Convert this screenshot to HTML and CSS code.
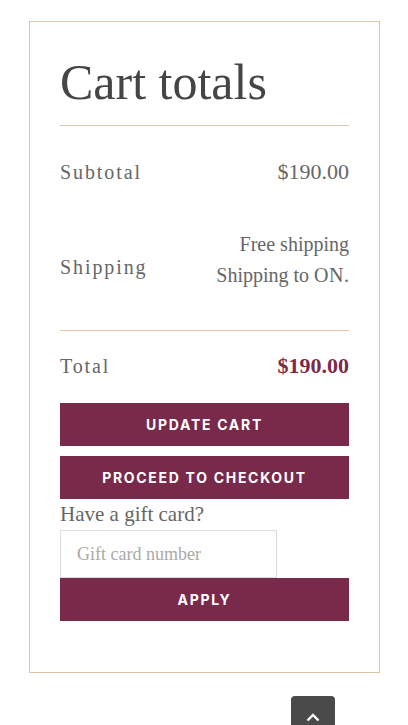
FILE: index.html
```html
<!DOCTYPE html>
<html lang="en">
<head>
<meta charset="utf-8">
<title>Cart totals</title>
<link rel="stylesheet" href="styles.css">
</head>
<body>
<div class="page">
  <div class="cart-totals">
    <h2 class="title">Cart totals</h2>
    <div class="row row-subtotal">
      <span class="label">Subtotal</span>
      <span class="amount">$190.00</span>
    </div>
    <div class="row row-shipping">
      <span class="label label-shipping">Shipping</span>
      <div class="ship-values">
        <span>Free shipping</span>
        <span>Shipping to <strong class="ship-strong">ON</strong>.</span>
      </div>
    </div>
    <div class="row row-total">
      <span class="label">Total</span>
      <span class="amount amount-total">$190.00</span>
    </div>
    <div class="actions">
      <button class="btn" type="button">Update cart</button>
      <button class="btn" type="button">Proceed to checkout</button>
    </div>
    <div class="gift">
      <p class="gift-title">Have a gift card?</p>
      <input class="gift-input" type="text" placeholder="Gift card number">
      <button class="btn btn-apply" type="button">Apply</button>
    </div>
  </div>
</div>
<a class="to-top" href="#" aria-label="Back to top">
  <svg width="14" height="9" viewBox="0 0 14 9"><path d="M1.5 7.5 L7 2 L12.5 7.5" fill="none" stroke="#fff" stroke-width="2.4"/></svg>
</a>
</body>
</html>
```
FILE: styles.css
```css
html, body {
  margin: 0;
  padding: 0;
  background: #fff;
}
.page {
  padding: 21px 28px 0 29px;
}
.cart-totals {
  width: 289px;
  border: 1px solid #dcc4a8;
  padding: 30px 30px 51px 30px;
  font-family: "Liberation Serif", "Times New Roman", serif;
  color: #666;
}
.title {
  margin: 0;
  font-weight: 400;
  font-size: 50px;
  line-height: 60px;
  color: #454545;
  padding-bottom: 13px;
  border-bottom: 1px solid #d6c7b5;
}
.row {
  display: flex;
  justify-content: space-between;
}
.label {
  font-size: 20px;
  letter-spacing: 1.9px;
  line-height: 28px;
}
.amount {
  font-size: 22px;
  line-height: 28px;
}
.row-subtotal {
  padding-top: 32px;
  height: 57px;
}
.row-shipping {
  padding-top: 14px;
  padding-bottom: 39px;
  align-items: flex-start;
  border-bottom: 1px solid #e2c5a3;
}
.label-shipping {
  padding-top: 24px;
}
.ship-values {
  display: flex;
  flex-direction: column;
  align-items: flex-end;
  font-size: 20px;
  line-height: 31px;
}
.ship-strong {
  font-weight: 400;
  letter-spacing: 0.5px;
}
.row-total {
  padding-top: 21px;
}
.amount-total {
  font-weight: 700;
  color: #7a2a4a;
}
.actions {
  margin-top: 23px;
  display: flex;
  flex-direction: column;
  gap: 10px;
}
.btn {
  display: block;
  width: 100%;
  height: 43px;
  border: 0;
  margin: 0;
  padding: 0;
  background: #792949;
  color: #fff;
  font-family: Inter, "DejaVu Sans", sans-serif;
  font-weight: 700;
  font-size: 14px;
  letter-spacing: 1.7px;
  text-transform: uppercase;
}
.gift-title {
  margin: 0;
  font-size: 21px;
  line-height: 31px;
  color: #666;
}
.gift-input {
  display: block;
  box-sizing: border-box;
  width: 217px;
  height: 48px;
  margin: 0;
  padding: 0 16px;
  border: 1px solid #dcdce0;
  font-family: "Liberation Serif", "Times New Roman", serif;
  font-size: 18px;
  color: #666;
  background: #fff;
  outline: none;
}
.gift-input::placeholder {
  color: #aaa;
}
.to-top {
  position: fixed;
  left: 291px;
  top: 696px;
  width: 44px;
  height: 44px;
  background: #4a4a4a;
  border-radius: 4px 4px 0 0;
  display: flex;
  justify-content: center;
  padding-top: 17px;
  box-sizing: border-box;
}
.to-top svg {
  display: block;
}
```
